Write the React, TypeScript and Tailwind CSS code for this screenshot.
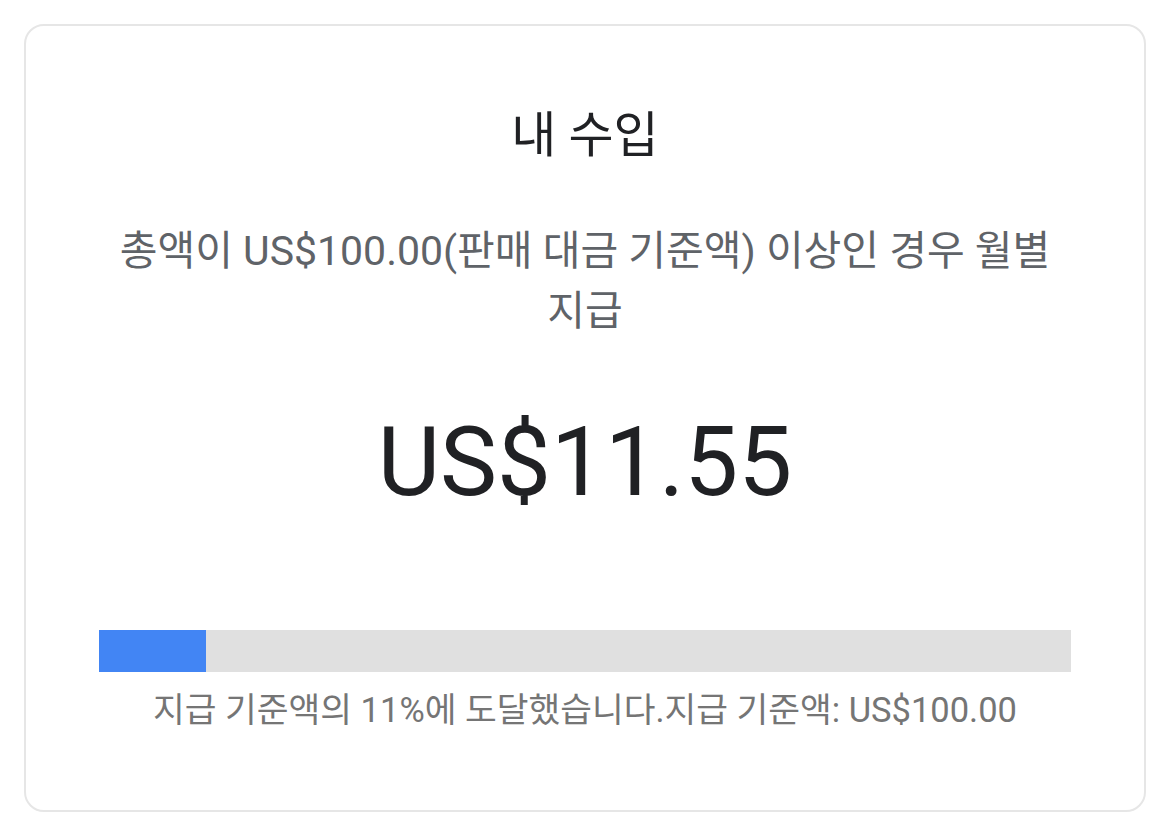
export default function App() {
  const progress = 11;
  return (
    <div className="min-h-[832px] w-full bg-white p-[24px] font-['Roboto','Noto_Sans_CJK_KR',sans-serif]">
      <div className="flex h-[788px] flex-col items-center rounded-[20px] border-2 border-[#e6e6e6] px-[73px] pt-[82px]">
        <h1 className="text-[49px] leading-[56px] font-normal text-[#202124]">내 수입</h1>
        <p className="mt-[57px] text-center text-[41px] leading-[60px] text-[#5f6368]">
          총액이 US$100.00(판매 대금 기준액) 이상인 경우 월별 지급
        </p>
        <div className="mt-[65px] text-[96px] leading-[112px] text-[#202124]">US$11.55</div>
        <div className="mt-[112px] h-[42px] w-full bg-[#e0e0e0]">
          <div className="h-full bg-[#4285f4]" style={{ width: `${progress}%` }} />
        </div>
        <p className="mt-[16px] text-center text-[34.5px] leading-[44px] text-[#757575]">
          지급 기준액의 11%에 도달했습니다.지급 기준액: US$100.00
        </p>
      </div>
    </div>
  );
}
